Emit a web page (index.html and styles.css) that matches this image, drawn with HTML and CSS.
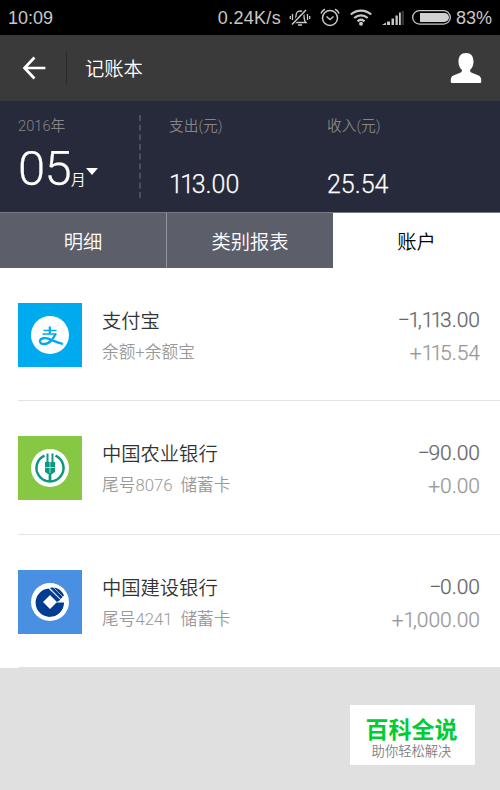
FILE: index.html
```html
<!DOCTYPE html>
<html lang="zh-CN">
<head>
    <meta charset="UTF-8">
    <meta name="viewport" content="width=device-width, initial-scale=1.0">
    <title>记账本</title>
    <link rel="stylesheet" href="styles.css">
</head>
<body>
    <div class="status-bar">
        <span class="time">10:09</span>
        <span class="speed">0.24K/s</span>
        <svg class="icon-mute" width="22" height="20" viewBox="0 0 22 20" fill="none" stroke="#c8c8c8" stroke-width="1.3">
            <path d="M5 14.5h12c-1.600-1.500-2-2.500-2-6.500c0-3-1.500-5-4-5S7 5 7 8c0 4-.4 5-2 6.500z"/>
            <path d="M9 17h4M3.500 6v6M1.300 8v3M18.500 6v6M20.700 8v3"/>
            <path d="M2.500 16.500L17 2" stroke="#000" stroke-width="3.500"/>
            <path d="M3 16.500L17 2" stroke-width="1.500"/>
        </svg>
        <svg class="icon-alarm" width="20" height="20" viewBox="0 0 20 20" fill="none" stroke="#c8c8c8" stroke-width="1.500">
            <circle cx="10" cy="10" r="7.500"/>
            <path d="M6.500 8.500l3.500 3l3.500-3M1 5.500C1.700 3.500 3 2 5 1.300M19 5.500C18.300 3.500 17 2 15 1.300"/>
        </svg>
        <svg class="icon-wifi" width="22" height="17" viewBox="0 0 22 17" fill="none" stroke="#c8c8c8" stroke-width="2.300">
            <path d="M.8 5.500c5.800-5.300 14.600-5.300 20.400 0M4.300 9c4-3.600 9.400-3.600 13.400 0M7.500 12.300c2.100-1.900 4.900-1.900 7 0"/>
            <circle cx="11" cy="14.800" r="2" fill="#c8c8c8" stroke="none"/>
        </svg>
        <svg class="icon-signal" width="22" height="16" viewBox="0 0 22 16" fill="#c8c8c8">
            <path d="M0 15l4-2.500V15zM5 11.500h3V15H5zM9.500 8.500H12V15H9.500zM13.500 5.500h2.300V15h-2.300zM17 2.500h1.800V15H17z"/>
            <path d="M19.500 1H22v14h-2.500z" fill="#333"/>
        </svg>
        <svg class="icon-battery" width="39" height="15" viewBox="0 0 39 15">
            <rect x=".7" y=".7" width="37.600" height="13.400" rx="6.700" fill="none" stroke="#c8c8c8" stroke-width="1.300"/>
            <path d="M8 3h24.500a4.400 4.400 0 0 1 0 8.900H8z" fill="#d0d0d0"/>
        </svg>
        <span class="percent">83%</span>
    </div>

    <div class="header">
        <svg class="back" width="24" height="24" viewBox="0 0 24 24" fill="none" stroke="#fff" stroke-width="2.700" stroke-linecap="square">
            <path d="M11.500 2.500L2.500 12l9 9.500M3 12h19"/>
        </svg>
        <h1>记账本</h1>
        <svg class="user" width="32" height="32" viewBox="0 0 32 32" fill="#fff">
            <path d="M16 1c5 0 7.500 3.300 7.500 8.500c0 4-1.300 6.500-3.500 8.500c0 2 1 2.500 3 3.300l5 2c2.500 1 3.200 2.500 3.200 5V30a1 1 0 0 1-1 1H1.800a1 1 0 0 1-1-1v-1.700c0-2.500.7-4 3.200-5l5-2c2-.8 3-1.300 3-3.300c-2.200-2-3.500-4.500-3.500-8.500C8.500 4.300 11 1 16 1z"/>
        </svg>
    </div>

    <div class="summary">
        <div class="date">
            <div class="label">2016年</div>
            <div class="month"><span class="month-num">05</span><span class="month-unit">月</span><span class="arrow"></span></div>
        </div>
        <div class="total expense">
            <div class="label">支出(元)</div>
            <div class="amount"><span class="tight">11</span>3.00</div>
        </div>
        <div class="total">
            <div class="label">收入(元)</div>
            <div class="amount">25.54</div>
        </div>
    </div>

    <div class="tabs">
        <div class="tab">明细</div>
        <div class="tab">类别报表</div>
        <div class="tab active">账户</div>
    </div>

    <div class="accounts">
        <div class="account">
            <svg class="logo alipay" viewBox="0 0 64 64">
                <circle cx="32" cy="32" r="19" fill="#fff"/>
                <g fill="none" stroke="#00aaef">
                    <path d="M25.500 27.500h13M24.500 31h14" stroke-width="1.300"/>
                    <path d="M31.800 23.500V31" stroke-width="2.200"/>
                    <path d="M37.500 31C35 36.500 31 41 26 41c-3 0-4.300-1.500-4-3.200c.5-3 5.500-3.300 10-1.400c4 1.600 8 3.500 13 4.600" stroke-width="2.300"/>
                </g>
            </svg>
            <div class="info">
                <div class="name">支付宝</div>
                <div class="detail">余额+余额宝</div>
            </div>
            <div class="money">
                <div class="out"><span class="minus">−</span><span class="tight">1</span>,<span class="tight">11</span>3.00</div>
                <div class="in">+<span class="tight">11</span>5.54</div>
            </div>
        </div>
        <div class="account">
            <svg class="logo abc" viewBox="0 0 64 64">
                <circle cx="32" cy="32" r="19" fill="#fff"/>
                <g fill="none" stroke="#0b9a80">
                    <path d="M26.500 19.600a13.500 13.500 0 1 0 11 0" stroke-width="2.500"/>
                    <path d="M29.500 17.500V28M34.500 17.500V28" stroke-width="2"/>
                    <path d="M32 37v9" stroke-width="2.800"/>
                </g>
                <path d="M27 26h10v10l-3 2h-4l-3-2z" fill="#0b9a80"/>
                <path d="M32 26v11M27 31.500h10" stroke="#fff" stroke-width=".6"/>
            </svg>
            <div class="info">
                <div class="name">中国农业银行</div>
                <div class="detail">尾号<span class="num">8076</span>储蓄卡</div>
            </div>
            <div class="money">
                <div class="out"><span class="minus">−</span>90.00</div>
                <div class="in">+0.00</div>
            </div>
        </div>
        <div class="account">
            <svg class="logo ccb" viewBox="0 0 64 64">
                <circle cx="32" cy="32" r="19" fill="#fff"/>
                <path d="M31 18.500A14.200 14.200 0 1 0 46 32.500h-7.500L32 39l-7-7l7-7l7 7l4-2.500z" fill="#003c91"/>
                <path d="M32 18c6-1.500 11 1.500 14 7.500l-3.300 3.500z" fill="#003c91"/>
                <path d="M31 18.500l12 11.500" stroke="#fff" stroke-width=".9"/>
                <path d="M35 17l10 10" stroke="#fff" stroke-width=".6"/>
            </svg>
            <div class="info">
                <div class="name">中国建设银行</div>
                <div class="detail">尾号<span class="num">4241</span>储蓄卡</div>
            </div>
            <div class="money">
                <div class="out"><span class="minus">−</span>0.00</div>
                <div class="in">+<span class="tight">1</span>,000.00</div>
            </div>
        </div>
    </div>

    <div class="footer">
        <div class="brand">
            <div class="brand-name">百科全说</div>
            <div class="brand-slogan">助你轻松解决</div>
        </div>
    </div>
</body>
</html>
```
FILE: styles.css
```css
* {
    box-sizing: border-box;
}
body {
    margin: 0;
    width: 500px;
    height: 790px;
    display: flex;
    flex-direction: column;
    overflow: hidden;
    background-color: #e0e0e0;
    font-family: Roboto, "Noto Sans CJK SC", sans-serif;
    font-weight: 350;
}
svg {
    display: block;
    flex-shrink: 0;
}

/* Status bar */
.status-bar {
    height: 35px;
    flex-shrink: 0;
    padding: 0 8px;
    display: flex;
    align-items: center;
    background-color: #000;
    color: #c8c8c8;
    font-family: "Liberation Sans", sans-serif;
    font-size: 18px;
    font-weight: 400;
    line-height: 36px;
}
.speed {
    margin-left: auto;
    margin-right: 8px;
    letter-spacing: 0.3px;
}
.icon-mute {
    margin-right: 9px;
}
.icon-alarm {
    margin-right: 10px;
}
.icon-wifi {
    margin-right: 10px;
}
.icon-signal {
    margin-right: 8px;
}
.icon-battery {
    margin-right: 5px;
}

/* Header */
.header {
    height: 66px;
    flex-shrink: 0;
    padding: 0 18px 0 22px;
    display: flex;
    align-items: center;
    background-color: #3a3a3a;
}
.header h1 {
    margin: 0 auto 0 20px;
    padding: 3px 0 0 18px;
    border-left: 1px solid #2b2b2b;
    color: #fff;
    font-size: 19.3px;
    font-weight: 350;
    line-height: 31px;
}

/* Month and totals */
.summary {
    height: 111px;
    flex-shrink: 0;
    padding: 14px 18px;
    display: flex;
    background-color: #272a3a;
    color: #fff;
}
.date {
    width: 121px;
    flex-shrink: 0;
}
.label {
    color: #858585;
    font-size: 14.7px;
    line-height: 23px;
}
.month {
    display: flex;
    align-items: baseline;
    height: 62px;
    line-height: 62px;
}
.month-num {
    font-size: 49px;
    letter-spacing: -0.8px;
}
.month-unit {
    font-size: 15px;
}
.arrow {
    align-self: center;
    margin: 4px 0 0 0;
    border: 6px solid transparent;
    border-top: 7px solid #fff;
    border-bottom: 0;
}
.total {
    flex: 1;
}
.expense {
    flex: none;
    padding-left: 28px;
    width: 188px;
    border-left: 2px dashed #4c4e5b;
}
.amount {
    margin-top: 32px;
    font-size: 25px;
    line-height: 30px;
}
.month-num,
.amount,
.money {
    -webkit-text-stroke: 0.25px currentColor;
}
.tight {
    letter-spacing: -2.5px;
}

/* Tabs */
.tabs {
    height: 56px;
    flex-shrink: 0;
    display: grid;
    grid-template-columns: 167px 166px 167px;
    border-top: 1px solid #777986;
    background-color: #5c5e69;
}
.tab {
    color: #fff;
    font-size: 19.3px;
    line-height: 59px;
    text-align: center;
    height: 55px;
}
.tab:first-child {
    border-right: 1px solid #92939c;
}
.tab.active {
    background-color: #fff;
    color: #000;
}

/* Account list */
.accounts {
    height: 400px;
    flex-shrink: 0;
    padding-left: 18px;
    background-color: #fff;
}
.account {
    height: 133.3px;
    padding: 35px 20px 0 0;
    display: flex;
    border-bottom: 1px solid #e3e3e3;
}
.logo {
    width: 64px;
    height: 64px;
}
.alipay {
    background-color: #00aaef;
}
.abc {
    background-color: #86c843;
}
.ccb {
    background-color: #4a90e2;
}
.info {
    margin-left: 20px;
    margin-right: auto;
}
.name {
    color: #333;
    font-size: 19.3px;
    line-height: 37px;
}
.detail {
    color: #999;
    font-size: 16.7px;
    line-height: 26px;
}
.num {
    margin-right: 8px;
}
.money {
    text-align: right;
    font-size: 21px;
}
.out {
    color: #666;
    line-height: 34px;
}
.minus {
    letter-spacing: -1.5px;
}
.in {
    color: #999;
    line-height: 33px;
}

/* Footer */
.footer {
    flex: 1;
    padding: 37px 25px 0 0;
    display: flex;
    justify-content: flex-end;
}
.brand {
    width: 125px;
    height: 60px;
    padding: 10px 2px 0 0;
    background-color: #fff;
    text-align: center;
}
.brand-name {
    color: #00cc33;
    font-size: 23px;
    font-weight: 700;
    line-height: 31px;
}
.brand-slogan {
    color: #808080;
    font-size: 13.3px;
    line-height: 12px;
}
```
